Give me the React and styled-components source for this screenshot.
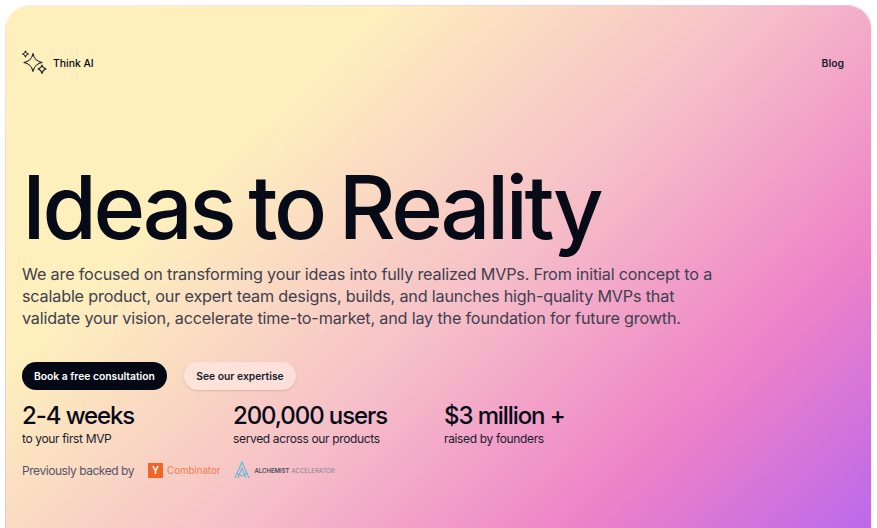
import React from 'react';
import styled, { createGlobalStyle } from 'styled-components';

const Global = createGlobalStyle`
  html, body {
    margin: 0;
    height: 100%;
    overflow: hidden;
    background: #ffffff;
  }
  body {
    font-family: Inter, "Liberation Sans", sans-serif;
    color: #070a17;
  }
`;

const Page = styled.div`
  padding: 5px 5px 0 5px;
  height: 528px;
  box-sizing: border-box;
  overflow: hidden;
`;

const Hero = styled.main`
  height: 560px;
  padding: 0 16px;
  border: 1px solid rgba(255, 255, 255, 0.6);
  border-radius: 24px;
  box-sizing: border-box;
  background: linear-gradient(136deg, #fef0bd 0%, #fef0bd 26%, #f6bfc8 53%, #ee82c8 77%, #b565f0 100%);
`;

const Header = styled.header`
  display: flex;
  justify-content: space-between;
  align-items: center;
  padding-top: 44px;
  height: 26px;
  padding-right: 11px;
`;

const Brand = styled.div`
  display: flex;
  align-items: center;
  gap: 6px;
  font-size: 10.4px;
  font-weight: 500;
`;

const NavLink = styled.a`
  font-size: 10.4px;
  font-weight: 600;
  color: #1b1c2e;
`;

const Title = styled.h1`
  margin: 83px 0 0;
  font-size: 88px;
  line-height: 96px;
  font-weight: 500;
  letter-spacing: -3.4px;
  word-spacing: -5px;
`;

const Lead = styled.p`
  margin: 8px 0 0;
  max-width: 700px;
  font-size: 16.2px;
  line-height: 22px;
  letter-spacing: -0.18px;
  color: #40404f;
`;

const Actions = styled.div`
  display: flex;
  gap: 17px;
  margin-top: 33px;
`;

const Button = styled.button`
  height: 28px;
  padding: 0 12.5px 0 12px;
  border-radius: 14px;
  border: 0;
  font: 600 10.3px Inter, sans-serif;
  color: ${(p) => (p.$dark ? '#ffffff' : '#1b1c2e')};
  background: ${(p) => (p.$dark ? '#040714' : 'rgba(255, 236, 232, 0.6)')};
  box-shadow: ${(p) => (p.$dark ? 'none' : '0 1px 2px rgba(180, 90, 110, 0.3)')};
`;

const Stats = styled.div`
  display: grid;
  grid-template-columns: repeat(3, 211px);
  margin-top: 12px;
`;

const StatValue = styled.div`
  font-size: 24px;
  line-height: 28px;
  font-weight: 500;
  letter-spacing: -1.1px;
`;

const StatLabel = styled.div`
  font-size: 12px;
  line-height: 18px;
  letter-spacing: -0.35px;
  color: #1b1c2e;
`;

const Backers = styled.div`
  display: flex;
  align-items: center;
  margin-top: 10px;
  height: 24px;
`;

const BackedBy = styled.span`
  font-size: 12px;
  letter-spacing: -0.45px;
  color: #55556a;
  margin-right: 14px;
`;

const YCBox = styled.span`
  width: 15px;
  height: 15px;
  background: #f26625;
  color: #fff;
  font-size: 10px;
  font-weight: 600;
  display: flex;
  align-items: center;
  justify-content: center;
`;

const YCName = styled.span`
  margin-left: 4px;
  font-size: 9.7px;
  color: #f27d48;
  margin-right: 14px;
`;

const AlchemistStrong = styled.span`
  margin-left: 4px;
  font-size: 6px;
  font-weight: 600;
  color: #4d4a62;
`;

const AlchemistLight = styled.span`
  margin-left: 2px;
  font-size: 6px;
  color: #8d7f97;
`;

function Sparkles() {
  return (
    <svg width="25" height="26" viewBox="0 0 25 26" fill="none" stroke="#23222c" strokeWidth="1.2" strokeLinejoin="round">
      <path d="M11 3.5 C12 8.5 14 11 20 12.5 C14 14 12 16.5 11 21.5 C10 16.5 8 14 2 12.5 C8 11 10 8.5 11 3.5 Z" />
      <path d="M3.5 1 C3.9 3 4.5 3.6 6.5 4 C4.5 4.4 3.9 5 3.5 7 C3.1 5 2.5 4.4 0.5 4 C2.5 3.6 3.1 3 3.5 1 Z" />
      <path d="M20 15 C20.5 17.5 21.3 18.3 24 19 C21.3 19.7 20.5 20.5 20 23.5 C19.5 20.5 18.7 19.7 16 19 C18.7 18.3 19.5 17.5 20 15 Z" />
    </svg>
  );
}

function AlchemistMark() {
  return (
    <svg width="16" height="18" viewBox="0 0 16 18" fill="none" stroke="#62b9dc" strokeWidth="1.1">
      <path d="M1 17 L8 1 L15 17" />
      <path d="M4 17 L8 7 L12 17" />
      <path d="M2.5 12 L8 15 L13.5 12" />
    </svg>
  );
}

const stats = [
  { value: '2-4 weeks', label: 'to your first MVP' },
  { value: '200,000 users', label: 'served across our products' },
  { value: '$3 million +', label: 'raised by founders' },
];

export default function App() {
  return (
    <Page>
      <Global />
      <Hero>
        <Header>
          <Brand>
            <Sparkles />
            Think AI
          </Brand>
          <NavLink>Blog</NavLink>
        </Header>
        <Title>Ideas to Reality</Title>
        <Lead>
          We are focused on transforming your ideas into fully realized MVPs. From initial concept to a scalable product, our expert team designs, builds, and launches high-quality MVPs that validate your vision, accelerate time-to-market, and lay the foundation for future growth.
        </Lead>
        <Actions>
          <Button $dark>Book a free consultation</Button>
          <Button>See our expertise</Button>
        </Actions>
        <Stats>
          {stats.map((s) => (
            <div key={s.value}>
              <StatValue>{s.value}</StatValue>
              <StatLabel>{s.label}</StatLabel>
            </div>
          ))}
        </Stats>
        <Backers>
          <BackedBy>Previously backed by</BackedBy>
          <YCBox>Y</YCBox>
          <YCName>Combinator</YCName>
          <AlchemistMark />
          <AlchemistStrong>ALCHEMIST</AlchemistStrong>
          <AlchemistLight>ACCELERATOR</AlchemistLight>
        </Backers>
      </Hero>
    </Page>
  );
}
